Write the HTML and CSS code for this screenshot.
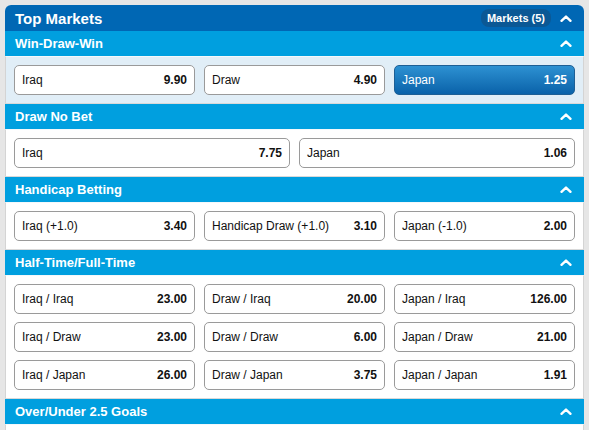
FILE: index.html
```html
<!DOCTYPE html>
<html lang="en">
<head>
  <meta charset="UTF-8" />
  <title>Top Markets</title>
  <link rel="stylesheet" href="styles.css">
</head>
<body>

  <div class="markets">
    <div class="top-head">
      <h1>Top Markets</h1>
      <span class="pill">Markets (5)</span>
      <svg class="chev" viewBox="0 0 12 7"><path d="M1.5 5.8 6 1.6l4.5 4.2" /></svg>
    </div>

    <div class="market">
      <div class="market-head">
        <h2>Win-Draw-Win</h2>
        <svg class="chev" viewBox="0 0 12 7"><path d="M1.5 5.8 6 1.6l4.5 4.2" /></svg>
      </div>
      <div class="market-body active cols-3">
        <button class="odd"><span>Iraq</span><b>9.90</b></button>
        <button class="odd"><span>Draw</span><b>4.90</b></button>
        <button class="odd selected"><span>Japan</span><b>1.25</b></button>
      </div>
    </div>

    <div class="market">
      <div class="market-head">
        <h2>Draw No Bet</h2>
        <svg class="chev" viewBox="0 0 12 7"><path d="M1.5 5.8 6 1.6l4.5 4.2" /></svg>
      </div>
      <div class="market-body cols-2">
        <button class="odd"><span>Iraq</span><b>7.75</b></button>
        <button class="odd"><span>Japan</span><b>1.06</b></button>
      </div>
    </div>

    <div class="market">
      <div class="market-head">
        <h2>Handicap Betting</h2>
        <svg class="chev" viewBox="0 0 12 7"><path d="M1.5 5.8 6 1.6l4.5 4.2" /></svg>
      </div>
      <div class="market-body cols-3">
        <button class="odd"><span>Iraq (+1.0)</span><b>3.40</b></button>
        <button class="odd"><span>Handicap Draw (+1.0)</span><b>3.10</b></button>
        <button class="odd"><span>Japan (-1.0)</span><b>2.00</b></button>
      </div>
    </div>

    <div class="market">
      <div class="market-head">
        <h2>Half-Time/Full-Time</h2>
        <svg class="chev" viewBox="0 0 12 7"><path d="M1.5 5.8 6 1.6l4.5 4.2" /></svg>
      </div>
      <div class="market-body cols-3">
        <button class="odd"><span>Iraq / Iraq</span><b>23.00</b></button>
        <button class="odd"><span>Draw / Iraq</span><b>20.00</b></button>
        <button class="odd"><span>Japan / Iraq</span><b>126.00</b></button>
        <button class="odd"><span>Iraq / Draw</span><b>23.00</b></button>
        <button class="odd"><span>Draw / Draw</span><b>6.00</b></button>
        <button class="odd"><span>Japan / Draw</span><b>21.00</b></button>
        <button class="odd"><span>Iraq / Japan</span><b>26.00</b></button>
        <button class="odd"><span>Draw / Japan</span><b>3.75</b></button>
        <button class="odd"><span>Japan / Japan</span><b>1.91</b></button>
      </div>
    </div>

    <div class="market">
      <div class="market-head">
        <h2>Over/Under 2.5 Goals</h2>
        <svg class="chev" viewBox="0 0 12 7"><path d="M1.5 5.8 6 1.6l4.5 4.2" /></svg>
      </div>
      <div class="market-body empty"></div>
    </div>
  </div>

</body>
</html>
```

FILE: styles.css
```css
body {
  margin: 0;
  background: #e6e6e6;
  font-family: "Liberation Sans", Arial, sans-serif;
}

.markets {
  margin: 5px 5px 0;
  background: #fff;
  border-radius: 6px 6px 0 0;
}

.top-head {
  display: flex;
  align-items: center;
  height: 26px;
  padding: 0 12px 0 10px;
  background: #0067b4;
  border-radius: 6px 6px 0 0;
  color: #fff;
}

.top-head h1 {
  flex: 1;
  margin: 0;
  font-size: 15px;
  font-weight: bold;
}

.pill {
  padding: 3px 6px;
  margin-right: 9px;
  background: #0b5895;
  border-radius: 8px;
  font-size: 11px;
  font-weight: bold;
}

.market-head {
  display: flex;
  align-items: center;
  height: 25px;
  padding: 0 12px 0 10px;
  background: #009fdf;
  color: #fff;
}

.market-head h2 {
  flex: 1;
  margin: 0;
  font-size: 13px;
  font-weight: bold;
}

.chev {
  width: 12px;
  height: 7px;
  fill: none;
  stroke: #fff;
  stroke-width: 2.4;
  stroke-linecap: round;
  stroke-linejoin: round;
}

.market-body {
  display: grid;
  gap: 8px 9px;
  padding: 8px;
  background: #fff;
  border-top: 1px solid #f4f8fb;
  border-bottom: 1px solid #d9d9d9;
  border-left: 1px solid #d4d4d4;
  border-right: 1px solid #d4d4d4;
}

.market-body.active {
  background: #e1eef7;
}

.market-body.empty {
  height: 30px;
}

.cols-3 {
  grid-template-columns: repeat(3, 1fr);
}

.cols-2 {
  grid-template-columns: repeat(2, 1fr);
}

.odd {
  display: flex;
  justify-content: space-between;
  align-items: center;
  height: 30px;
  padding: 0 7px;
  margin: 0;
  background: #fff;
  border: 1px solid #9a9a9a;
  border-radius: 5px;
  font-family: inherit;
  font-size: 12px;
  color: #111;
  text-align: left;
}

.odd b {
  font-weight: bold;
}

.odd.selected {
  background: linear-gradient(#2d91d2, #0a62a9);
  border-color: #1d5f95;
  color: #fff;
}
```
